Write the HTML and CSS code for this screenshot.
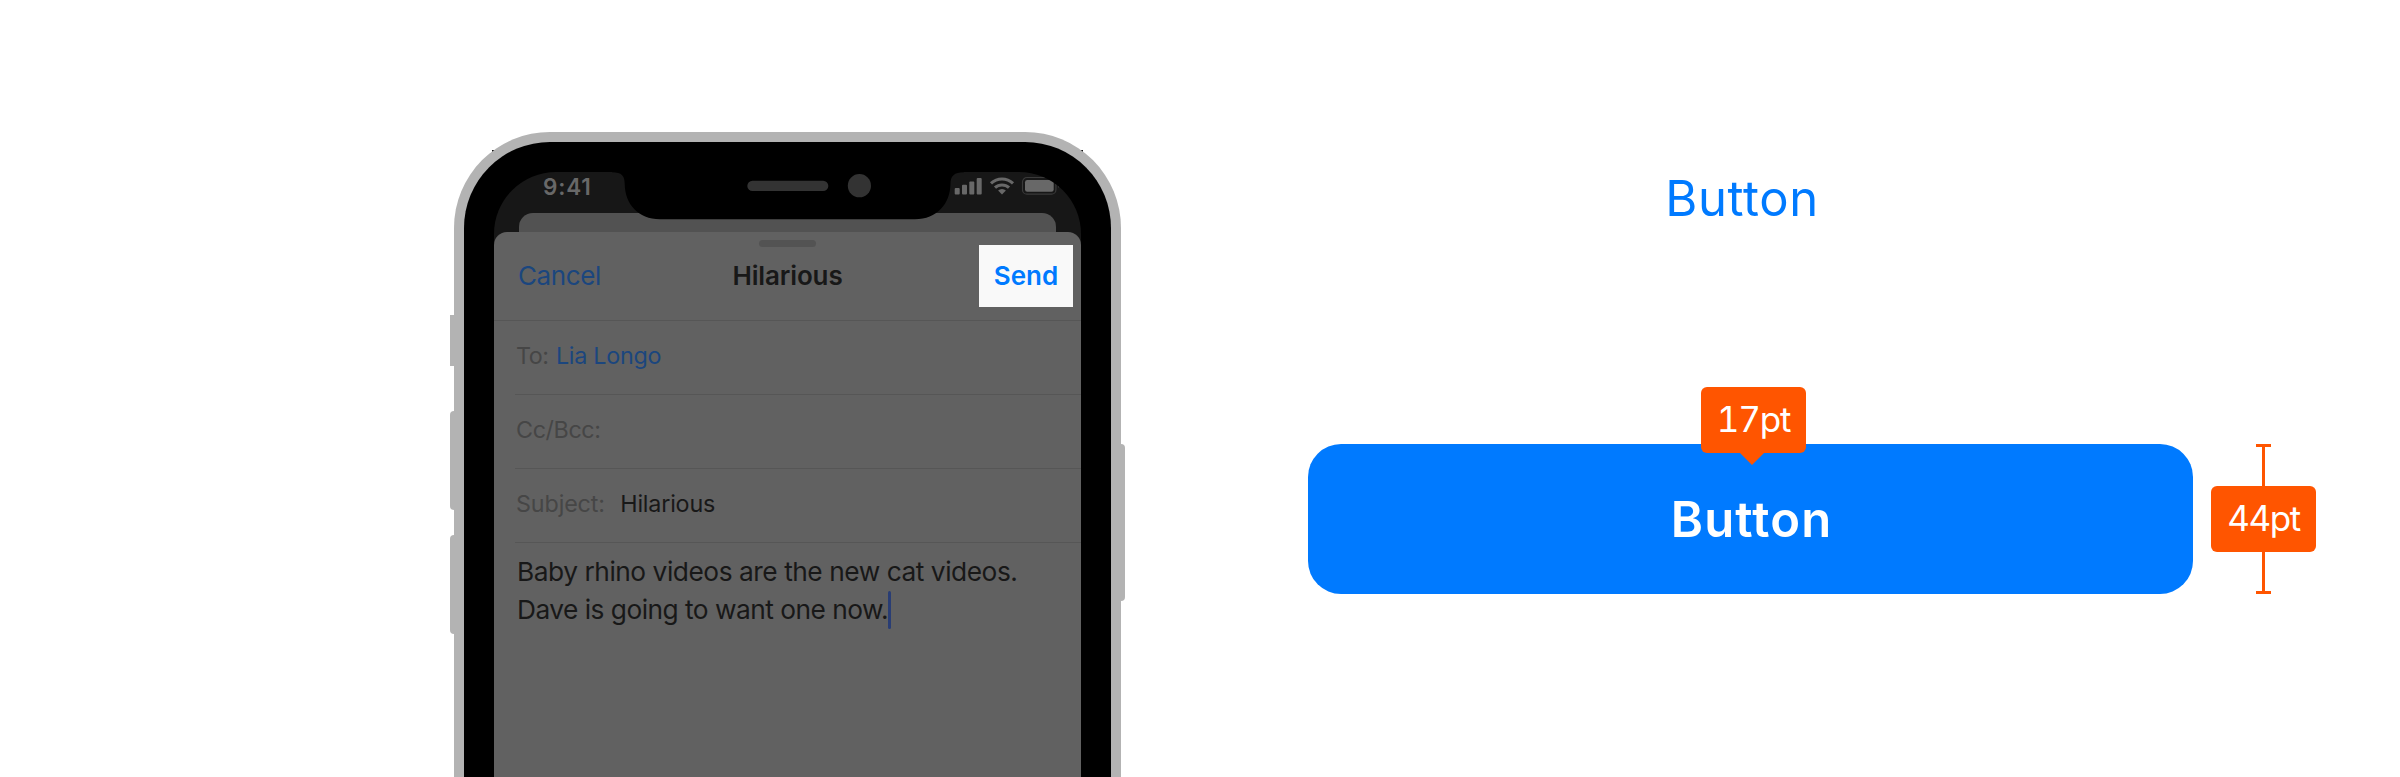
FILE: index.html
```html
<!DOCTYPE html>
<html lang="en">
<head>
<meta charset="utf-8">
<title>Buttons</title>
<link rel="stylesheet" href="styles.css">
</head>
<body>
<main class="page">
  <section class="device">
    <span class="corner corner-left"></span>
    <span class="corner corner-right"></span>
    <span class="key key-mute"></span>
    <span class="key key-up"></span>
    <span class="key key-down"></span>
    <span class="key key-power"></span>
    <div class="frame">
      <div class="screen">
        <div class="status">
          <span class="time">9:41</span>
          <svg class="indicators" width="106" height="20" viewBox="0 0 106 20">
            <g fill="#686868">
              <rect x="0.7" y="12" width="5" height="6.5" rx="1"/>
              <rect x="8" y="8.8" width="5" height="9.7" rx="1"/>
              <rect x="15.3" y="5.4" width="5" height="13.1" rx="1"/>
              <rect x="22.7" y="2" width="5" height="16.5" rx="1"/>
            </g>
            <g fill="none" stroke="#686868" stroke-width="3.1">
              <path d="M37 7.3a16.3 16.3 0 0 1 22 0"/>
              <path d="M41 11.7a10.3 10.3 0 0 1 14 0"/>
            </g>
            <path d="M48 18.5l-3.9-4a5.6 5.6 0 0 1 7.8 0z" fill="#686868"/>
            <rect x="68.5" y="1.5" width="33.4" height="16.7" rx="4.5" fill="none" stroke="#3a3a3a" stroke-width="1.2"/>
            <rect x="71" y="4" width="28.7" height="11.8" rx="2.3" fill="#686868"/>
            <path d="M104 7.5v4.5q1.5-.6 1.5-2.25t-1.5-2.25" fill="#303030"/>
          </svg>
        </div>
        <div class="back-card"></div>
        <div class="sheet">
          <div class="grabber"></div>
          <header class="nav">
            <span class="cancel">Cancel</span>
            <span class="title">Hilarious</span>
            <span class="send">Send</span>
          </header>
          <div class="field"><span class="label to">To:</span><span class="link">Lia Longo</span></div>
          <div class="field"><span class="label cc">Cc/Bcc:</span></div>
          <div class="field"><span class="label subject">Subject:</span><span class="value">Hilarious</span></div>
          <div class="message">
            <div>Baby rhino videos are the new cat videos.</div>
            <div class="last"><span>Dave is going to want one now.</span><span class="caret"></span></div>
          </div>
        </div>
        <svg class="notch" width="360" height="50" viewBox="0 0 360 50">
          <path d="M4 0V.2C14 .2 16.7 4 16.7 12C17 32 30 47.2 52 47.2H307C329 47.2 342 32 342.5 12C342.5 4 346 .2 356 .2V0z" fill="#000"/>
          <rect x="139.3" y="8.7" width="81" height="10.4" rx="5.2" fill="#333"/>
          <circle cx="251.4" cy="13.7" r="11.6" fill="#333"/>
        </svg>
      </div>
    </div>
  </section>
  <section class="spec">
    <div class="text-button">Button</div>
    <div class="button-row">
      <div class="filled-button">
        <span>Button</span>
        <div class="badge callout">17pt</div>
      </div>
      <div class="measure">
        <div class="badge height">44pt</div>
      </div>
    </div>
  </section>
</main>
</body>
</html>
```
FILE: styles.css
```css
* { box-sizing: border-box; }
body { margin: 0; background: #fff; font-family: Inter, "Liberation Sans", sans-serif; }
.page { display: flex; width: 2400px; height: 777px; overflow: hidden; background: #fff; }
.device { position: relative; width: 667px; height: 645px; margin: 132px 0 0 454px; flex: none; }
.frame { position: relative; height: 700px; border: 10px solid #b3b3b3; border-bottom: 0; border-radius: 96px 96px 0 0; background: #000; padding: 30px 30px 0; }
.key { position: absolute; background: #b3b3b3; width: 8px; left: -4px; border-radius: 4px 0 0 4px; }
.key-mute { top: 183px; height: 51px; border-radius: 0; }
.key-up { top: 279px; height: 99px; }
.key-down { top: 403px; height: 99px; }
.key-power { left: auto; right: -4px; top: 312px; height: 157px; border-radius: 0 4px 4px 0; }
.corner { position: absolute; top: 18px; width: 8px; height: 3px; background: #111; }
.corner-left { left: 38px; }
.corner-right { right: 38px; }
.screen { position: relative; height: 620px; border-radius: 62px 62px 0 0; background: #171717; overflow: hidden; }
.status { display: flex; justify-content: space-between; height: 41px; padding: 0 21px 0 49px; }
.time { font-size: 22.5px; font-weight: 600; line-height: 29px; letter-spacing: 0.8px; color: #686868; }
.indicators { margin-top: 4px; }
.back-card { height: 19px; margin: 0 25px; background: #525252; border-radius: 14px 14px 0 0; }
.sheet { height: 570px; background: #616161; border-radius: 13px 13px 0 0; padding-top: 8px; }
.grabber { width: 57px; height: 7px; margin: 0 auto; background: #535353; border-radius: 4px; }
.nav { display: flex; justify-content: space-between; align-items: flex-start; height: 76px; margin: -2px 0 0; padding: 0 8px 0 24px; font-size: 26px; line-height: 62px; border-bottom: 1px solid #565656; }
.cancel { color: #1b467e; letter-spacing: -0.39px; }
.title { font-weight: 600; color: #181818; letter-spacing: -0.13px; margin-right: 5px; }
.send { display: block; width: 94px; height: 62px; background: #f9f9f9; color: #007aff; font-weight: 600; text-align: center; }
.field { height: 74px; margin-left: 21px; padding-left: 1px; border-bottom: 1px solid #565656; font-size: 23.3px; line-height: 69px; display: flex; }
.label { color: #464646; }
.to { letter-spacing: -0.45px; }
.cc { letter-spacing: -0.38px; }
.subject { letter-spacing: -0.12px; }
.link { color: #1b467e; margin-left: 7.4px; letter-spacing: -0.27px; }
.value { color: #181818; margin-left: 15.4px; letter-spacing: -0.19px; }
.message { padding: 10px 23px; font-size: 26.3px; line-height: 37.7px; color: #181818; letter-spacing: -0.46px; white-space: nowrap; }
.last { display: flex; letter-spacing: -0.52px; }
.caret { width: 3px; height: 38px; background: #293d74; border-radius: 2px; }
.notch { position: absolute; left: 114px; top: 0; }
.spec { margin-left: 187px; width: 1010px; flex: none; }
.text-button { width: 885px; margin-top: 164px; height: 68px; padding-right: 17px; line-height: 70px; font-size: 49px; letter-spacing: 0.64px; text-align: center; color: #007aff; }
.button-row { display: flex; margin-top: 212px; }
.filled-button { position: relative; width: 885px; height: 150px; padding-left: 2px; border-radius: 33px; background: #007aff; color: #fff; font-size: 49px; font-weight: 600; line-height: 152px; letter-spacing: 1.13px; text-align: center; }
.badge { width: 105px; height: 66px; border-radius: 6px; background: #ff5500; color: #fff; font-size: 35px; font-weight: 400; line-height: 64px; letter-spacing: -1.5px; text-align: center; font-feature-settings: "tnum"; font-kerning: none; }
.callout { position: absolute; left: 393px; top: -57px; letter-spacing: -1.2px; }
.callout::after { content: ""; position: absolute; left: 39px; top: 66px; border: 12.5px solid transparent; border-top-color: #ff5500; border-bottom: 0; }
.measure { width: 105px; height: 150px; margin-left: 18px; display: flex; align-items: center; background: linear-gradient(#ff5500, #ff5500) 51px 0 / 3px 150px no-repeat, linear-gradient(#ff5500, #ff5500) 45px 0 / 15px 3px no-repeat, linear-gradient(#ff5500, #ff5500) 45px 147px / 15px 3px no-repeat; }
```
